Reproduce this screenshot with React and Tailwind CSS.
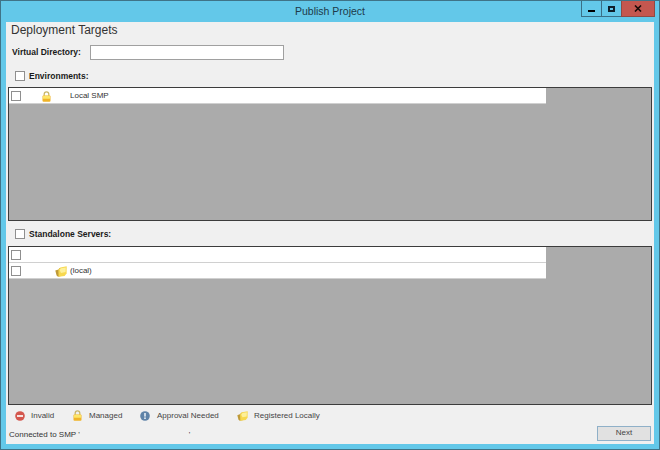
import React from "react";

const LockIcon = ({ className }) => (
    <svg viewBox="0 0 9 11" className={className}>
        <path d="M2.2 5V3.2C2.2 1.7 3.2.8 4.5.8s2.3.9 2.3 2.4V5" fill="none" stroke="#c9b66a" strokeWidth="1.3" />
        <rect x=".5" y="4.4" width="8" height="6.4" rx="1" fill="#f0b429" />
        <rect x="1" y="4.8" width="7" height="3" rx=".5" fill="#fde668" />
    </svg>
);

const FolderIcon = ({ className }) => (
    <svg viewBox="0 0 12 11" className={className}>
        <path d="M.3 4.6 3.6 3.4 4.4 2 7 2 7 9.8 3 10.8 1.6 9.6z" fill="#bf9a38" />
        <path d="M3.4 3.6 5.4 1.4 11.7.3 11.6 7.4 9.6 10 3.6 10.8z" fill="#f7d84f" />
        <path d="M4.6 4 6 2.2 10.8 1.4 10.6 6 6 7z" fill="#fdf09a" />
    </svg>
);

const InvalidIcon = ({ className }) => (
    <svg viewBox="0 0 10 10" className={className}>
        <circle cx="5" cy="5" r="4.8" fill="#d4574e" />
        <rect x="2" y="4" width="6" height="2" fill="#f6e3e0" />
    </svg>
);

const InfoIcon = ({ className }) => (
    <svg viewBox="0 0 10 10" className={className}>
        <circle cx="5" cy="5" r="4.8" fill="#5f83a8" />
        <rect x="4.2" y="2" width="1.6" height="3.6" fill="#e8eef5" />
        <rect x="4.2" y="6.4" width="1.6" height="1.6" fill="#e8eef5" />
    </svg>
);

const Checkbox = () => (
    <span className="block w-[10px] h-[10px] shrink-0 bg-white border border-[#8f8f8f]" />
);

const GridRow = ({ icon, label, indent }) => (
    <div className="flex items-center h-4 w-[537px] bg-white border-b border-[#d0d0d0] pl-[2px] pt-[2px] text-[8px] text-[#333]">
        <Checkbox />
        {indent}
        {icon}
        {label && <span>{label}</span>}
    </div>
);

const Panel = ({ height, children }) => (
    <div className={`mx-[2px] border border-[#3c3c3c] bg-[#ababab] ${height}`}>{children}</div>
);

const SectionLabel = ({ children, className }) => (
    <div className={`flex items-center gap-[4px] pl-[9px] ${className}`}>
        <Checkbox />
        <span className="text-[8.5px] font-bold text-[#1a1a1a]">{children}</span>
    </div>
);

const LegendItem = ({ icon, label, className }) => (
    <div className={`flex items-center ${className}`}>
        {icon}
        <span className="text-[8px] text-[#444]">{label}</span>
    </div>
);

const App = () => {
    return (
        <div
            className="w-[660px] h-[450px] flex flex-col border border-[#3f7387] bg-[#63c8e9] overflow-hidden"
            style={{ fontFamily: '"Liberation Sans", Arial, sans-serif' }}
        >
            {/* Title bar */}
            <div className="grid grid-cols-[1fr_auto_1fr] h-[21px] shrink-0">
                <div />
                <div className="pt-[3px] text-[10.5px] leading-[15px] text-[#1d3a4a]">Publish Project</div>
                <div className="flex justify-end items-start pr-[4px]">
                    <div className="flex items-center justify-center w-[21px] h-[16px] border border-t-0 border-[#3a6f86]">
                        <span className="block w-[7px] h-[2px] mt-[4px] bg-black" />
                    </div>
                    <div className="flex items-center justify-center w-[19px] h-[16px] border-b border-[#3a6f86]">
                        <span className="block w-[7px] h-[6px] border-2 border-[#10202a]" />
                    </div>
                    <div className="flex items-center justify-center w-[34px] h-[16px] border-b border-x border-[#8f4a44] bg-[#c4574f]">
                        <svg viewBox="0 0 8 7" className="w-2 h-[7px]">
                            <path d="M1 .5 7 6.5M7 .5 1 6.5" stroke="#1a0a08" strokeWidth="1.6" fill="none" />
                        </svg>
                    </div>
                </div>
            </div>

            {/* Client area */}
            <div className="flex-1 mx-[5px] mb-[5px] bg-[#f0f0f0] flex flex-col">
                <h1 className="pl-[5px] pt-[1px] text-[12px] leading-[15px] text-[#333]">Deployment Targets</h1>

                <div className="flex items-center pl-[6px] mt-[7px]">
                    <label className="w-[78px] text-[8.5px] font-bold text-[#1a1a1a]">Virtual Directory:</label>
                    <input type="text" className="w-[194px] h-[15px] bg-white border border-[#a0a0a0]" />
                </div>

                <SectionLabel className="mt-[10px] mb-[4px]">Environments:</SectionLabel>
                <Panel height="h-[134px]">
                    <GridRow
                        label="Local SMP"
                        indent={<span className="w-[21px] shrink-0" />}
                        icon={<LockIcon className="w-[9px] h-[11px] mr-[19px] shrink-0" />}
                    />
                </Panel>

                <SectionLabel className="mt-[7px] mb-[5px]">Standalone Servers:</SectionLabel>
                <Panel height="h-[159px]">
                    <GridRow />
                    <GridRow
                        label="(local)"
                        indent={<span className="w-[34px] shrink-0" />}
                        icon={<FolderIcon className="w-[12px] h-[11px] mr-[3px] shrink-0" />}
                    />
                </Panel>

                {/* Legend */}
                <div className="flex items-center h-5 pl-[9px] pt-[2px]">
                    <LegendItem
                        className="w-[58px]"
                        icon={<InvalidIcon className="w-[10px] h-[10px] mr-[6px]" />}
                        label="Invalid"
                    />
                    <LegendItem
                        className="w-[67px]"
                        icon={<LockIcon className="w-[9px] h-[11px] mr-[7px]" />}
                        label="Managed"
                    />
                    <LegendItem
                        className="w-[97px]"
                        icon={<InfoIcon className="w-[10px] h-[10px] mr-[7px]" />}
                        label="Approval Needed"
                    />
                    <LegendItem
                        icon={<FolderIcon className="w-[11px] h-[10px] mr-[6px]" />}
                        label="Registered Locally"
                    />
                </div>

                {/* Status line */}
                <div className="flex items-center justify-between pl-[3px] pr-[3px] mt-[1px]">
                    <span className="mt-[3px] text-[8px] text-[#333] whitespace-pre">
                        Connected to SMP '                                                 '
                    </span>
                    <button className="w-[54px] h-[15px] bg-[#e1e1e1] border border-[#8fb0c8] text-[8px] text-[#444]">
                        Next
                    </button>
                </div>
            </div>
        </div>
    );
};

export default App;
